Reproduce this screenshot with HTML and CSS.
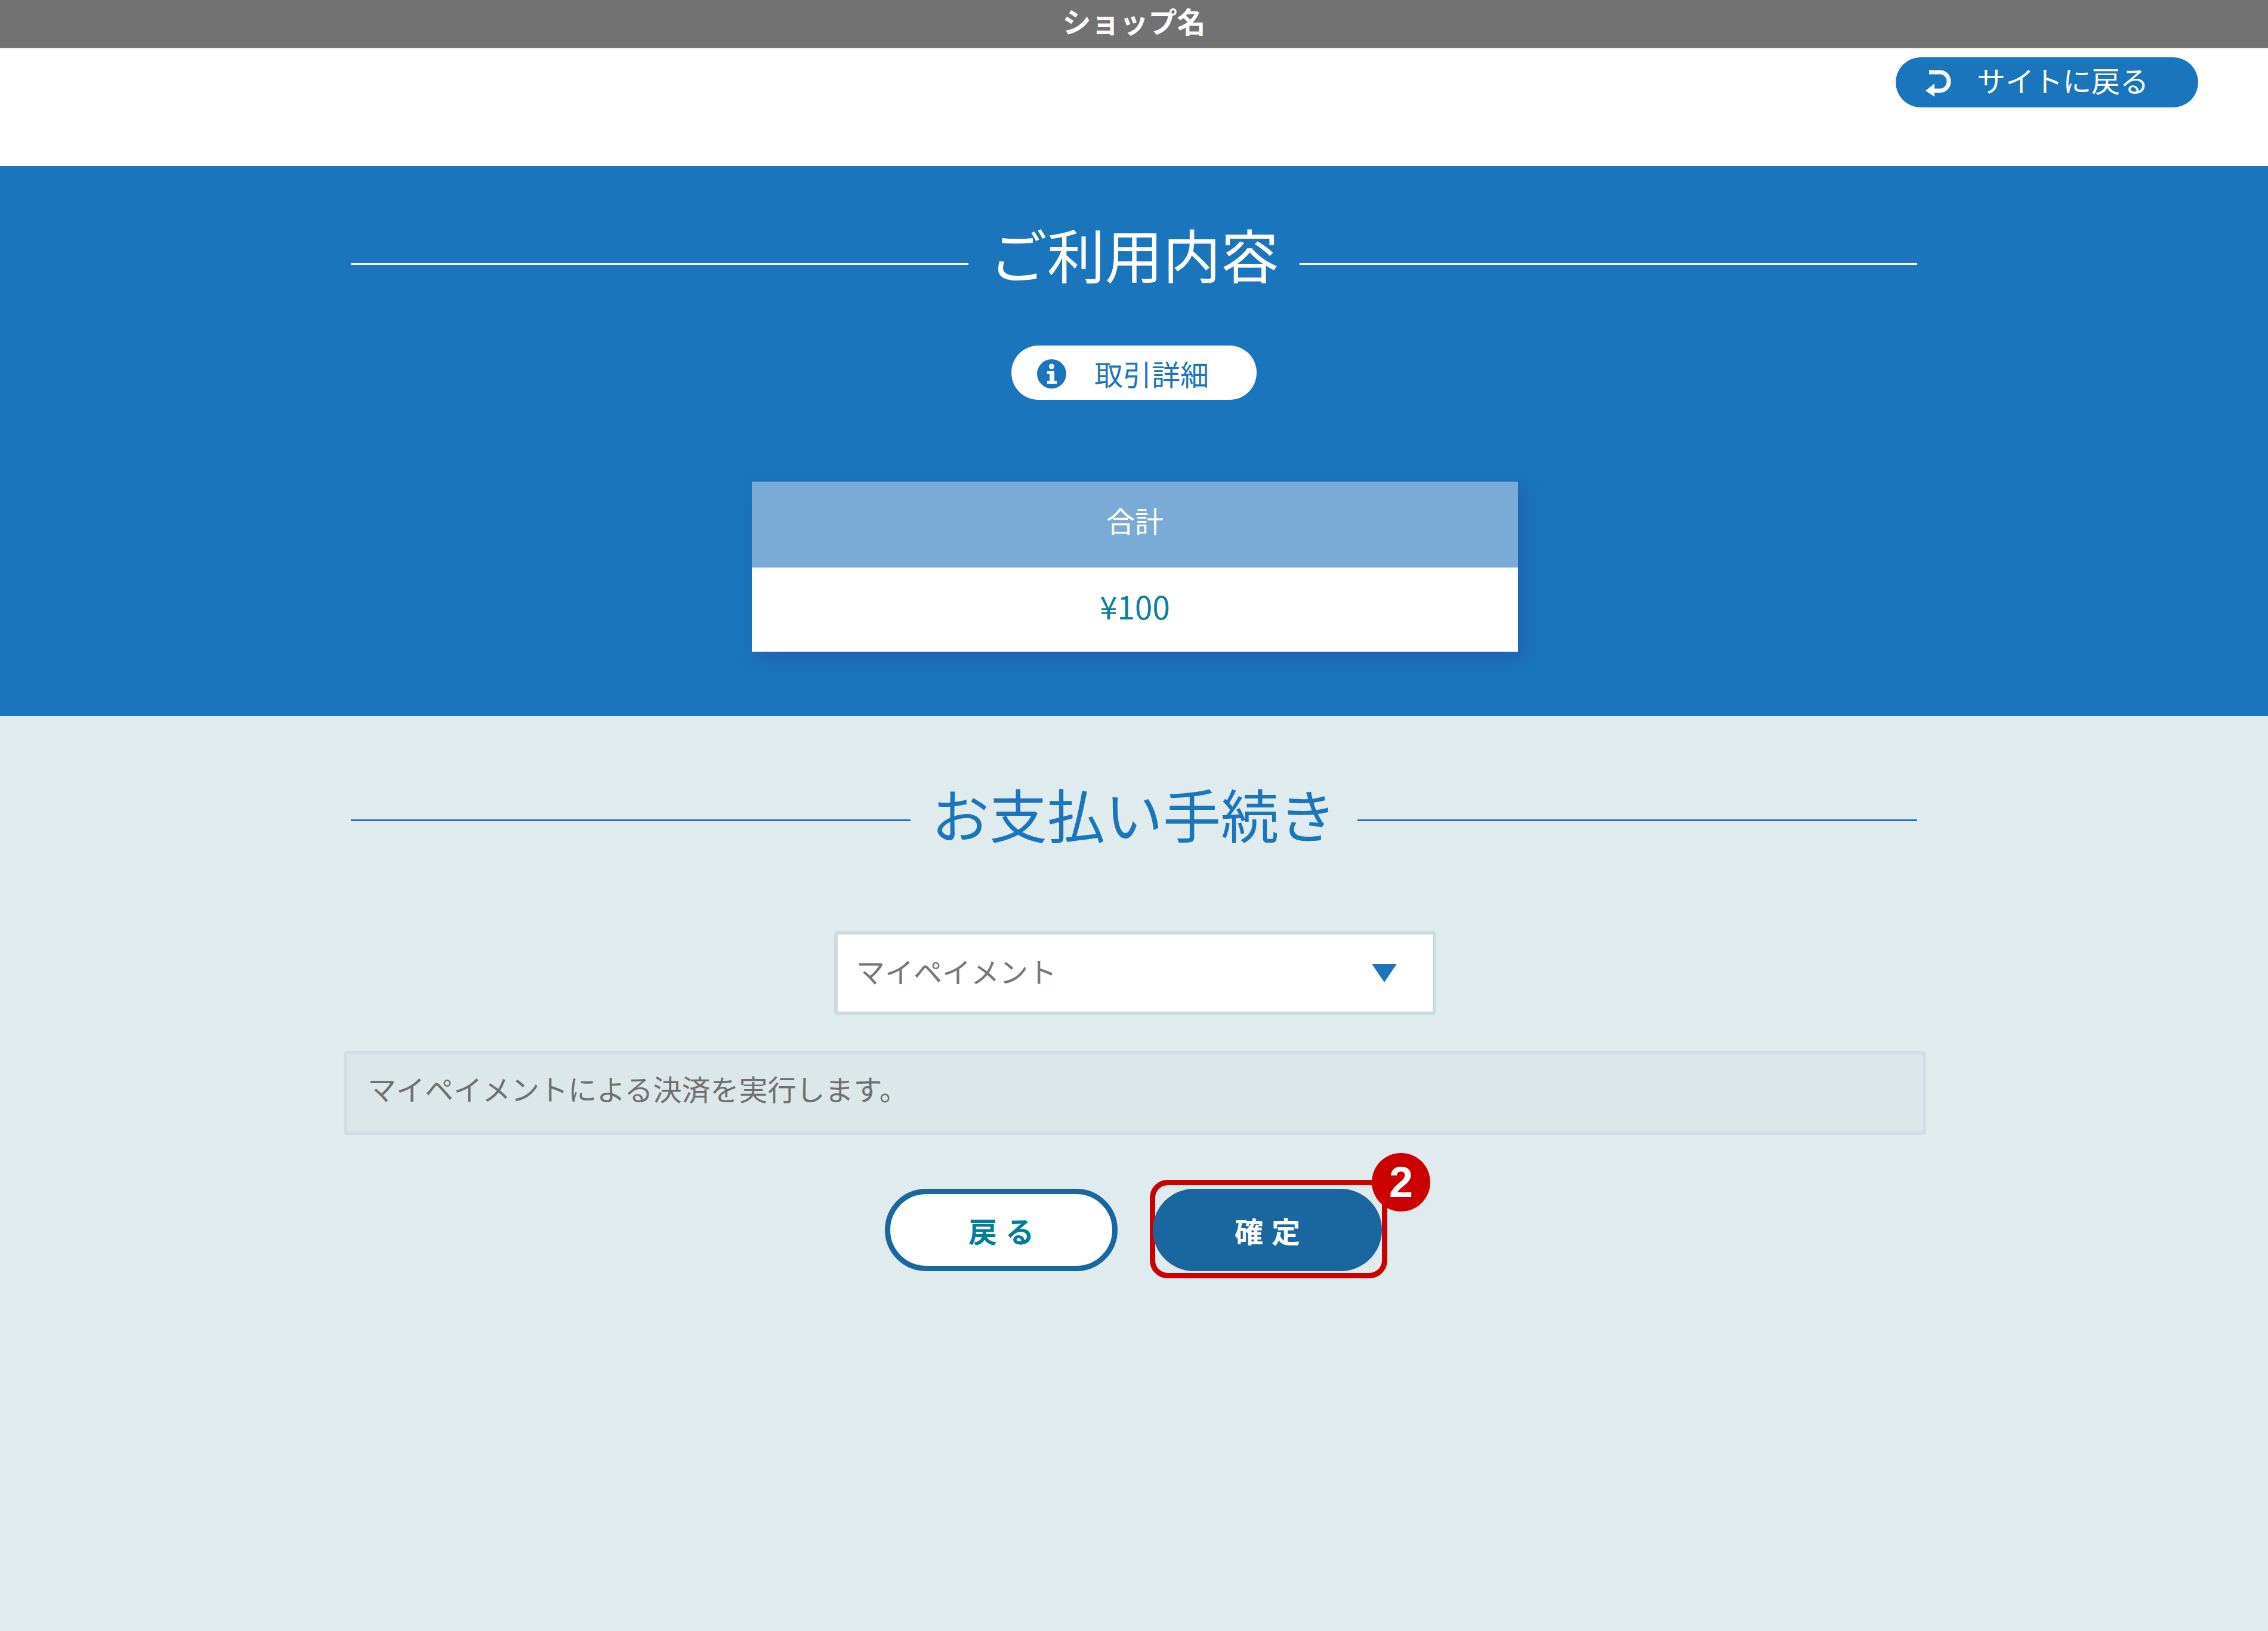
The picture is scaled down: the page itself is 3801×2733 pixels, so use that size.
FILE: index.html
```html
<!DOCTYPE html>
<html lang="ja">

<head>
  <meta charset="UTF-8">
  <meta name="viewport" content="width=device-width, initial-scale=1.0">
  <title>ショップ名</title>
  <link rel="stylesheet" href="styles.css">
</head>

<body>
  <header class="shop-bar">ショップ名</header>

  <div class="return-row">
    <a class="return-btn" href="#">
      <svg class="return-icon" viewBox="0 0 43 45" width="43" height="45">
        <path d="M6 4H24C33 4 39 11 39 19.500C39 28 33 35 24 35H12" fill="none" stroke="#fff" stroke-width="7"/>
        <path d="M0 35L15 23V45Z" fill="#fff"/>
      </svg>
      <span>サイトに戻る</span>
    </a>
  </div>

  <section class="summary">
    <h2 class="section-title title-white"><span>ご利用内容</span></h2>

    <a class="detail-btn" href="#">
      <svg class="info-icon" viewBox="0 0 49 49" width="49" height="49">
        <circle cx="24.500" cy="24.500" r="24.500" fill="#1b75bc"/>
        <circle cx="24.500" cy="12" r="4.500" fill="#fff"/>
        <path d="M17 20H29V36H33V41H17V36H21V25H17Z" fill="#fff"/>
      </svg>
      <span>取引詳細</span>
    </a>

    <table class="total-table">
      <tr>
        <th>合計</th>
      </tr>
      <tr>
        <td>¥100</td>
      </tr>
    </table>
  </section>

  <section class="payment">
    <h2 class="section-title title-blue"><span>お支払い手続き</span></h2>

    <div class="method-select">
      <span>マイペイメント</span>
      <i class="select-arrow"></i>
    </div>

    <div class="method-note">マイペイメントによる決済を実行します。</div>

    <div class="actions">
      <button class="btn btn-back" type="button">戻る</button>
      <div class="highlight">
        <button class="btn btn-confirm" type="button">確定</button>
        <span class="step-badge">2</span>
      </div>
    </div>
  </section>
</body>

</html>
```

FILE: styles.css
```css
* {
  box-sizing: border-box;
}

body {
  margin: 0;
  min-height: 2733px;
  display: flex;
  flex-direction: column;
  font-family: "Noto Sans CJK JP", "Noto Sans", sans-serif;
  font-size: 48px;
  background-color: #e0ebee;
}

a {
  text-decoration: none;
}

.shop-bar {
  height: 81px;
  background-color: #727272;
  border-bottom: 1px solid #b5b5b5;
  color: #fff;
  font-weight: 700;
  line-height: 68px;
  text-align: center;
}

.return-row {
  height: 197px;
  padding: 15px 117px 0 0;
  display: flex;
  justify-content: flex-end;
  background-color: #fff;
}

.return-btn {
  width: 507px;
  height: 84px;
  padding-left: 50px;
  display: flex;
  align-items: center;
  gap: 43px;
  border-radius: 42px;
  background-color: #1b75bc;
  color: #fff;
}

.return-icon {
  margin-top: 3px;
}

.return-btn span {
  margin-top: -10px;
}

.summary {
  height: 922px;
  padding-top: 124px;
  display: flex;
  flex-direction: column;
  align-items: center;
  background-color: #1b75bc;
}

.section-title {
  width: 2625px;
  height: 80px;
  margin: 0;
  display: flex;
  align-items: center;
  gap: 35px;
  font-size: 97px;
  font-weight: 400;
  line-height: 80px;
}

.section-title::before,
.section-title::after {
  content: "";
  flex: 1;
  height: 3px;
}

.section-title span {
  margin-top: -36px;
}

.title-white {
  color: #fff;
}

.title-white::before,
.title-white::after {
  background-color: #fff;
}

.title-blue {
  color: #1b75bc;
}

.title-blue::before,
.title-blue::after {
  background-color: #1b75bc;
}

.detail-btn {
  width: 411px;
  height: 91px;
  margin-top: 97px;
  padding-left: 43px;
  display: flex;
  align-items: center;
  gap: 47px;
  border-radius: 46px;
  background-color: #fff;
  color: #1b75bc;
}

.info-icon {
  margin-top: 4px;
}

.total-table {
  width: 1284px;
  margin: 137px 0 0 3px;
  border-collapse: collapse;
  box-shadow: 10px 12px 24px rgba(40, 60, 160, 0.35);
  text-align: center;
}

.total-table th {
  height: 144px;
  padding: 0 0 16px;
  background-color: #7aabd6;
  color: #fff;
  font-weight: 400;
}

.total-table td {
  height: 141px;
  padding: 0 0 14px;
  background-color: #fff;
  color: #0e7fa0;
  font-size: 53px;
}

.payment {
  flex: 1;
  padding-top: 134px;
  display: flex;
  flex-direction: column;
  align-items: center;
}

.payment .section-title span {
  margin-top: -24px;
}

.method-select {
  width: 1009px;
  height: 141px;
  margin: 146px 0 0 4px;
  padding: 0 60px 0 31px;
  display: flex;
  align-items: center;
  justify-content: space-between;
  border: 6px solid #cbdbe2;
  border-radius: 6px;
  background-color: #fff;
  color: #777;
}

.method-select span {
  margin-top: -10px;
}

.select-arrow {
  width: 0;
  height: 0;
  border-style: solid;
  border-width: 31px 21px 0;
  border-color: #1b75bc transparent transparent;
}

.method-note {
  width: 2652px;
  height: 141px;
  margin: 60px 0 0 3px;
  padding: 0 34px 18px;
  display: flex;
  align-items: center;
  border: 6px solid #cfdee4;
  border-radius: 6px;
  background-color: #dce7ea;
  color: #6f6f6f;
}

.actions {
  margin-top: 75px;
  padding-left: 7px;
  display: flex;
  align-items: flex-start;
  gap: 54px;
}

.highlight {
  position: relative;
  width: 398px;
  height: 165px;
  padding: 6px 0 3px;
  border: 9px solid #cc0000;
  border-radius: 30px;
}

.btn {
  display: block;
  height: 138px;
  padding: 0 0 0 14px;
  border-radius: 69px;
  font-family: inherit;
  font-size: 48px;
  font-weight: 700;
  letter-spacing: 14px;
}

.btn-back {
  width: 390px;
  margin-top: 15px;
  border: 9px solid #1a66a1;
  background-color: #fff;
  color: #007d9b;
}

.btn-confirm {
  width: 384px;
  margin-left: -4px;
  border: 0;
  background-color: #1a66a1;
  color: #fff;
}

.step-badge {
  position: absolute;
  top: -54px;
  right: -81px;
  width: 98px;
  height: 98px;
  border-radius: 50%;
  background-color: #cc0000;
  color: #fff;
  font-family: "Liberation Sans", sans-serif;
  font-size: 72px;
  font-weight: 700;
  line-height: 98px;
  text-align: center;
}
```
